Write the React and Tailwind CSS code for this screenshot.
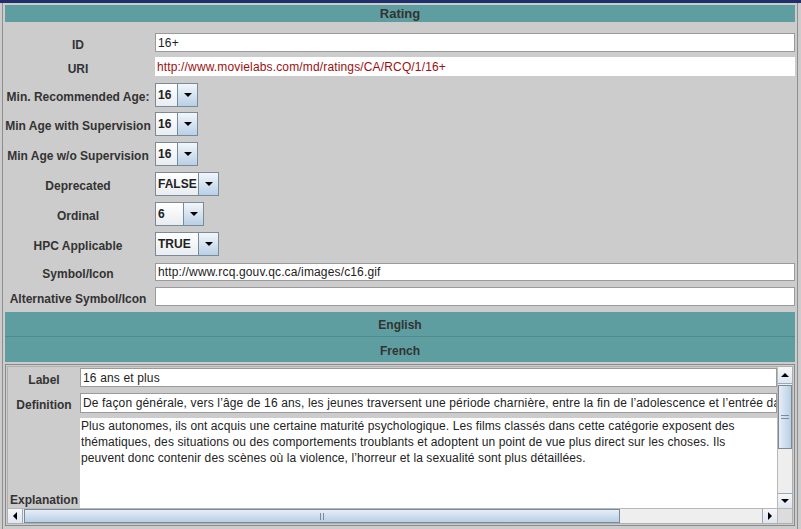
import React from "react";

const font = { fontFamily: '"Liberation Sans", Arial, sans-serif' };

const Arrow = ({ dir = "down" }) => {
  if (dir === "down")
    return <div className="w-0 h-0 border-x-[4px] border-x-transparent border-t-[4px] border-t-black" />;
  if (dir === "up")
    return <div className="w-0 h-0 border-x-[4px] border-x-transparent border-b-[4px] border-b-black" />;
  if (dir === "left")
    return <div className="w-0 h-0 border-y-[4px] border-y-transparent border-r-[4px] border-r-black" />;
  return <div className="w-0 h-0 border-y-[4px] border-y-transparent border-l-[4px] border-l-black" />;
};

const Combo = ({ value, textW }) => (
  <div className="flex h-[24px] border border-[#7a8a99] ml-[4px]">
    <div
      className={`${textW} flex items-center pl-[2px] text-[12px] font-bold text-[#222] bg-linear-to-b from-white to-[#e9edf1]`}
    >
      {value}
    </div>
    <div className="w-[20px] border-l border-[#7a8a99] flex items-center justify-center bg-linear-to-b from-[#f2f6fa] to-[#b9d0e6]">
      <Arrow />
    </div>
  </div>
);

const Label = ({ children }) => (
  <div className="w-[146px] leading-[16px] translate-y-[2px] text-center text-[12px] font-bold text-[#333] shrink-0">
    {children}
  </div>
);

const Field = ({ value, red, bordered = true, h = "h-[19px]" }) => (
  <div
    className={`flex-1 ml-[4px] ${h} bg-white flex items-center pl-[2px] text-[12px] tracking-[0.15px] ${
      red ? "text-[#9b1010]" : "text-[#222]"
    } ${bordered ? "border border-[#9a9a9a]" : ""}`}
  >
    {value}
  </div>
);

const SectionBar = ({ title, extra = "" }) => (
  <div className={`h-[25px] bg-[#5f9ea0] flex items-center justify-center ${extra}`}>
    <span className="translate-y-[1px] text-[12px] leading-[16px] font-bold text-[#333]">{title}</span>
  </div>
);

export default function App() {
  return (
    <div className="w-[801px] h-[529px] bg-[#cccccc] overflow-hidden" style={font}>
      <div className="h-[3px] bg-[#1f2f6b]" />
      <div className="ml-[2px] mr-[3px] border-x border-[#8e8e8e] h-[526px] px-[2px] pt-[2px] flex flex-col">
        {/* header */}
        <div className="h-[17px] bg-[#5f9ea0] flex items-center justify-center text-[13px] font-bold text-[#333]">
          Rating
        </div>

        <div className="flex items-center mt-[11px]">
          <Label>ID</Label>
          <Field value="16+" />
        </div>
        <div className="flex items-center mt-[5px]">
          <Label>URI</Label>
          <Field value="http://www.movielabs.com/md/ratings/CA/RCQ/1/16+" red bordered={false} />
        </div>
        <div className="flex items-center mt-[7px]">
          <Label>Min. Recommended Age:</Label>
          <Combo value="16" textW="w-[21px]" />
        </div>
        <div className="flex items-center mt-[5px]">
          <Label>Min Age with Supervision</Label>
          <Combo value="16" textW="w-[21px]" />
        </div>
        <div className="flex items-center mt-[6px]">
          <Label>Min Age w/o Supervision</Label>
          <Combo value="16" textW="w-[21px]" />
        </div>
        <div className="flex items-center mt-[6px]">
          <Label>Deprecated</Label>
          <Combo value="FALSE" textW="w-[42px]" />
        </div>
        <div className="flex items-center mt-[6px]">
          <Label>Ordinal</Label>
          <Combo value="6" textW="w-[27px]" />
        </div>
        <div className="flex items-center mt-[6px]">
          <Label>HPC Applicable</Label>
          <Combo value="TRUE" textW="w-[42px]" />
        </div>
        <div className="flex items-center mt-[7px]">
          <Label>Symbol/Icon</Label>
          <Field value="http://www.rcq.gouv.qc.ca/images/c16.gif" h="h-[18px]" />
        </div>
        <div className="flex items-center mt-[6px]">
          <Label>Alternative Symbol/Icon</Label>
          <Field value="" />
        </div>

        <SectionBar title="English" extra="mt-[6px] border-b border-[#4f8a8c]" />
        <SectionBar title="French" />

        {/* french panel */}
        <div className="mt-[2px] h-[162px] border border-[#8a8a8a] p-[1px] flex flex-col">
          <div className="flex-1 border border-[#b0b0b0] flex flex-col">
            <div className="flex flex-1 min-h-0">
              <div className="flex-1 flex flex-col bg-[#cccccc] overflow-hidden">
                <div className="flex items-center mt-[1px]">
                  <div className="w-[72px] leading-[16px] translate-y-[2px] shrink-0 text-center text-[12px] font-bold text-[#333]">
                    Label
                  </div>
                  <div className="flex-1 h-[19px] bg-white border border-[#9a9a9a] flex items-center pl-[2px] text-[12px] tracking-[0.15px] text-[#222]">
                    16 ans et plus
                  </div>
                </div>
                <div className="flex items-center mt-[6px]">
                  <div className="w-[72px] leading-[16px] translate-y-[2px] shrink-0 text-center text-[12px] font-bold text-[#333]">
                    Definition
                  </div>
                  <div className="flex-1 h-[20px] bg-white border border-[#9a9a9a] flex items-center pl-[2px] text-[12px] tracking-[0.15px] text-[#222] whitespace-nowrap overflow-hidden">
                    De façon générale, vers l’âge de 16 ans, les jeunes traversent une période charnière, entre la fin de l’adolescence et l’entrée dans l’âge adulte.
                  </div>
                </div>
                <div className="flex flex-1 mt-[5px]">
                  <div className="w-[72px] shrink-0 flex items-end justify-center text-[12px] leading-[16px] font-bold text-[#333]">
                    Explanation
                  </div>
                  <div className="flex-1 bg-white pl-[1px] text-[12px] tracking-[0.1px] leading-[16px] text-[#222]">
                    <div>Plus autonomes, ils ont acquis une certaine maturité psychologique. Les films classés dans cette catégorie exposent des</div>
                    <div>thématiques, des situations ou des comportements troublants et adoptent un point de vue plus direct sur les choses. Ils</div>
                    <div>peuvent donc contenir des scènes où la violence, l’horreur et la sexualité sont plus détaillées.</div>
                  </div>
                </div>
              </div>

              {/* vertical scrollbar */}
              <div className="w-[15px] flex flex-col bg-[#eeeeee] border-l border-[#b8b8b8]">
                <div className="h-[17px] flex items-center justify-center bg-linear-to-b from-[#f4f7fa] to-[#dfe6ee] border-b border-[#9aa8b6]">
                  <Arrow dir="up" />
                </div>
                <div className="h-[64px] mt-[1px] border border-[#7a8a99] bg-linear-to-r from-[#e6eef7] to-[#b8cfe5] flex flex-col items-center justify-center gap-[2px]">
                  <div className="w-[8px] h-px bg-[#7a8a99]" />
                  <div className="w-[8px] h-px bg-[#7a8a99]" />
                </div>
                <div className="flex-1" />
                <div className="h-[15px] flex items-center justify-center bg-linear-to-b from-[#f4f7fa] to-[#dfe6ee] border-t border-[#9aa8b6]">
                  <Arrow />
                </div>
              </div>
            </div>

            {/* horizontal scrollbar */}
            <div className="h-[15px] flex border-t border-[#b8b8b8]">
              <div className="flex-1 flex bg-[#eeeeee]">
                <div className="w-[15px] flex items-center justify-center bg-linear-to-b from-[#f4f7fa] to-[#dfe6ee] border-r border-[#9aa8b6]">
                  <Arrow dir="left" />
                </div>
                <div className="w-[596px] ml-[1px] border border-[#7a8a99] bg-linear-to-b from-[#e6eef7] to-[#b8cfe5] flex items-center justify-center gap-[2px]">
                  <div className="w-px h-[7px] bg-[#7a8a99]" />
                  <div className="w-px h-[7px] bg-[#7a8a99]" />
                </div>
                <div className="flex-1" />
                <div className="w-[15px] flex items-center justify-center bg-linear-to-b from-[#f4f7fa] to-[#dfe6ee] border-l border-[#9aa8b6]">
                  <Arrow dir="right" />
                </div>
              </div>
              <div className="w-[15px] bg-[#dcdcdc] border-l border-[#b8b8b8]" />
            </div>
          </div>
        </div>
      </div>
    </div>
  );
}
